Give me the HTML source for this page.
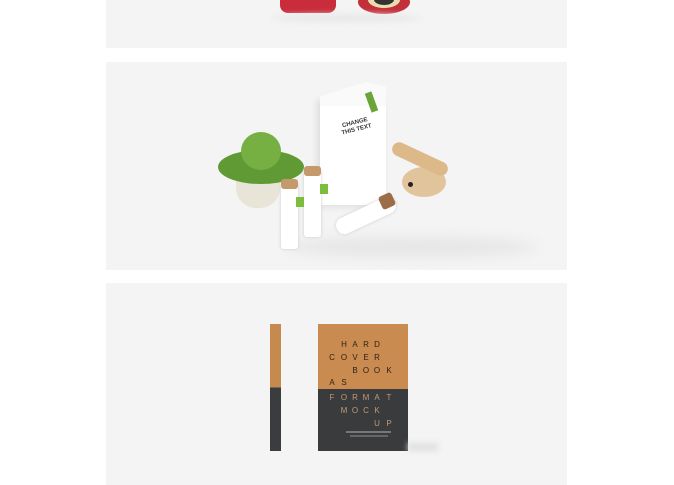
<!DOCTYPE html><html><head><style>
body{margin:0;width:674px;height:485px;background:#fff;position:relative;overflow:hidden;font-family:"Liberation Sans",sans-serif}
.p{position:absolute;left:106px;width:461px;background:#f4f4f4}
.a{position:absolute}
.l{position:absolute;font-size:8px;color:#2e2218;width:8px;text-align:center}
.d{color:#c09a76}
</style></head><body>
<div class="p" style="top:0;height:48px;background:#f4f4f4">
 <div class="a" style="left:174px;top:0;width:56px;height:13px;background:#c92c3a;border-radius:0 0 8px 8px"></div>
 <div class="a" style="left:252px;top:-10px;width:52px;height:24px;background:#c4303a;border-radius:50%"></div>
 <div class="a" style="left:262px;top:-8px;width:32px;height:16px;background:#e8dcb0;border-radius:50%"></div>
 <div class="a" style="left:268px;top:-6px;width:20px;height:11px;background:#333;border-radius:50%"></div>
 <div class="a" style="left:165px;top:14px;width:150px;height:8px;background:#e8e8e8;border-radius:50%;filter:blur(3px)"></div>
</div>
<div class="p" style="top:62px;height:208px">
 <div class="a" style="left:180px;top:175px;width:250px;height:20px;background:#e6e6e6;border-radius:50%;filter:blur(6px)"></div>
 <div class="a" style="left:214px;top:36px;width:66px;height:107px;background:#fff;box-shadow:-3px 2px 6px #ddd"></div>
 <div class="a" style="left:214px;top:20px;width:66px;height:24px;background:#fafafa;clip-path:polygon(0 60%,70% 0,100% 20%,100% 100%,0 100%)"></div>
 <div class="a" style="left:226px;top:58px;width:48px;font-size:6px;font-weight:bold;color:#333;text-align:center;transform:rotate(-14deg);line-height:7px">CHANGE<br>THIS TEXT</div>
 <div class="a" style="left:262px;top:30px;width:7px;height:20px;background:#6aa53a;transform:rotate(-20deg)"></div>
 <div class="a" style="left:130px;top:118px;width:44px;height:28px;background:#e8e4d8;border-radius:0 0 20px 20px"></div>
 <div class="a" style="left:112px;top:88px;width:86px;height:34px;background:#5f9a34;border-radius:50%"></div>
 <div class="a" style="left:135px;top:70px;width:40px;height:38px;background:#76b043;border-radius:50%"></div>
 <div class="a" style="left:175px;top:120px;width:17px;height:67px;background:#fff;border-radius:3px;box-shadow:0 0 3px #ccc"></div>
 <div class="a" style="left:175px;top:117px;width:17px;height:10px;background:#c49a6c;border-radius:3px"></div>
 <div class="a" style="left:198px;top:107px;width:17px;height:68px;background:#fff;border-radius:3px;box-shadow:0 0 3px #ccc"></div>
 <div class="a" style="left:198px;top:104px;width:17px;height:10px;background:#c49a6c;border-radius:3px"></div>
 <div class="a" style="left:190px;top:135px;width:8px;height:10px;background:#7cbd3e"></div>
 <div class="a" style="left:214px;top:122px;width:8px;height:10px;background:#7cbd3e"></div>
 <div class="a" style="left:228px;top:145px;width:64px;height:17px;background:#fff;border-radius:8px;transform:rotate(-25deg);box-shadow:0 0 3px #ccc"></div>
 <div class="a" style="left:274px;top:132px;width:14px;height:14px;background:#9c6e48;border-radius:3px;transform:rotate(-25deg)"></div>
 <div class="a" style="left:296px;top:105px;width:44px;height:30px;background:#e2c49c;border-radius:50%"></div>
 <div class="a" style="left:284px;top:90px;width:60px;height:14px;background:#ddb98a;border-radius:7px;transform:rotate(25deg)"></div>
 <div class="a" style="left:302px;top:120px;width:5px;height:5px;background:#222;border-radius:50%"></div>
</div>
<div class="p" style="top:283px;height:202px">
 <div class="a" style="left:164px;top:41px;width:11px;height:127px;background:linear-gradient(#c68a4f 0 50%,#3b3c3e 50%)"></div>
 <div class="a" style="left:212px;top:41px;width:90px;height:127px;background:linear-gradient(#c98b50 0 51%,#3a3b3d 51%)"></div>
 <div class="a" style="left:302px;top:160px;width:30px;height:8px;background:#e0e0e0;filter:blur(3px)"></div>
 <div class="a" style="left:240px;top:148px;width:45px;height:2px;background:#777"></div>
 <div class="a" style="left:244px;top:152px;width:38px;height:2px;background:#666"></div>
</div>
<div class="a" style="left:0;top:-3px">
 <span class="l" style="left:340px;top:343px">H</span><span class="l" style="left:351px;top:343px">A</span><span class="l" style="left:362px;top:343px">R</span><span class="l" style="left:373px;top:343px">D</span>
 <span class="l" style="left:328px;top:356px">C</span><span class="l" style="left:340px;top:356px">O</span><span class="l" style="left:351px;top:356px">V</span><span class="l" style="left:362px;top:356px">E</span><span class="l" style="left:373px;top:356px">R</span>
 <span class="l" style="left:351px;top:369px">B</span><span class="l" style="left:362px;top:369px">O</span><span class="l" style="left:373px;top:369px">O</span><span class="l" style="left:385px;top:369px">K</span>
 <span class="l" style="left:328px;top:381px">A</span><span class="l" style="left:340px;top:381px">S</span>
 <span class="l d" style="left:328px;top:396px">F</span><span class="l d" style="left:340px;top:396px">O</span><span class="l d" style="left:351px;top:396px">R</span><span class="l d" style="left:362px;top:396px">M</span><span class="l d" style="left:373px;top:396px">A</span><span class="l d" style="left:385px;top:396px">T</span>
 <span class="l d" style="left:340px;top:409px">M</span><span class="l d" style="left:351px;top:409px">O</span><span class="l d" style="left:362px;top:409px">C</span><span class="l d" style="left:373px;top:409px">K</span>
 <span class="l d" style="left:373px;top:422px">U</span><span class="l d" style="left:385px;top:422px">P</span>
</div>
</body></html>
